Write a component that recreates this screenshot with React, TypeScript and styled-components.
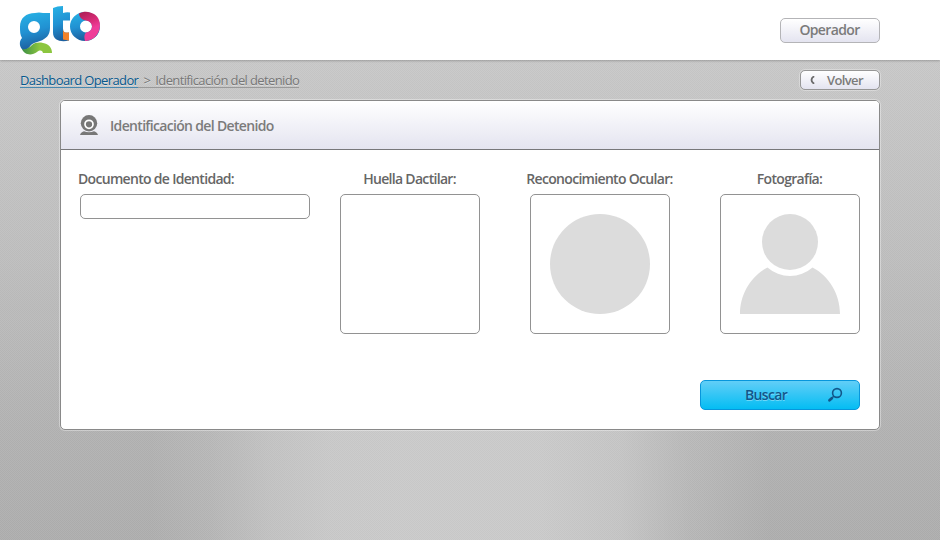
import React from "react";
import styled, { createGlobalStyle } from "styled-components";

const GlobalStyle = createGlobalStyle`
  * { box-sizing: border-box; }
  body { margin: 0; font-family: "Open Sans", "Noto Sans", sans-serif; color: #666; }
`;

const Page = styled.div`
  height: 540px;
  overflow: hidden;
  background:
    repeating-conic-gradient(rgba(255,255,255,0.05) 0 25%, rgba(0,0,0,0.015) 0 50%) 0 0 / 2px 2px,
    linear-gradient(90deg, transparent 150px, rgba(202,202,202,0.25) 210px, rgba(202,202,202,0.7) 270px, rgba(202,202,202,0.95) 330px, #cacaca 400px, #cacaca 540px, rgba(202,202,202,0.8) 620px, rgba(202,202,202,0.3) 690px, transparent 770px) 0 430px / 940px 110px no-repeat,
    linear-gradient(180deg, #c8c8c8 60px, #bebebe 260px, #b2b2b2 430px, #aeaeae 540px);
`;

const Header = styled.header`
  height: 60px;
  padding: 4px 60px 0 18px;
  display: flex;
  justify-content: space-between;
  background: #fff;
  box-shadow: 0 1px 2px rgba(0, 0, 0, 0.22);
`;

const Button = styled.button<{ $small?: boolean }>`
  display: flex;
  align-items: center;
  justify-content: ${(p) => (p.$small ? "flex-start" : "center")};
  width: ${(p) => (p.$small ? 80 : 100)}px;
  height: ${(p) => (p.$small ? 20 : 25)}px;
  margin-top: ${(p) => (p.$small ? 0 : 14)}px;
  padding: ${(p) => (p.$small ? "0 0 0 9px" : "0 1px 2px 0")};
  gap: 12px;
  border: 1px solid ${(p) => (p.$small ? "#969696" : "#b4b4b7")};
  border-radius: 5px;
  background: linear-gradient(#fff, #e4e4f0);
  box-shadow: ${(p) => (p.$small ? "0 0 0 1px rgba(255,255,255,0.3)" : "none")};
  color: #7b7b7b;
  font: 600 ${(p) => (p.$small ? 13 : 14)}px/18px "Open Sans", sans-serif;
  letter-spacing: -0.63px;
`;

const NavRow = styled.nav`
  height: 40px;
  padding: 10px 60px 0 20px;
  display: flex;
  justify-content: space-between;
`;

const Crumbs = styled.div`
  display: flex;
  height: 17px;
  margin-top: 1px;
  font-size: 13px;
  line-height: 18px;
  letter-spacing: -0.62px;
  color: #777;
  border-bottom: 1px solid #999;
  text-shadow: 0 1px rgba(255, 255, 255, 0.4);
`;

const CrumbLink = styled.a`
  height: 17px;
  color: #07588d;
  border-bottom: 1px solid #4588b0;
`;

const Separator = styled.span`
  width: 17px;
  text-align: center;
`;

const Panel = styled.main`
  width: 820px;
  height: 330px;
  margin: 0 60px;
  border: 1px solid #898989;
  border-radius: 5px;
  background: #fff;
  box-shadow: 0 0 0 1px rgba(255, 255, 255, 0.35);
`;

const PanelHeader = styled.div`
  height: 49px;
  padding: 0 19px;
  display: flex;
  align-items: center;
  gap: 12px;
  border-bottom: 1px solid #77777a;
  border-radius: 4px 4px 0 0;
  background: linear-gradient(#fff, #e4e4f0);
`;

const Title = styled.h1`
  margin: 0;
  padding-top: 1px;
  color: #7b7b7b;
  font-size: 14px;
  font-weight: 600;
  line-height: 20px;
  letter-spacing: -0.67px;
`;

const Fields = styled.form`
  height: 230px;
  padding: 18px 19px 0;
  display: grid;
  grid-template-columns: 260px 190px 190px 140px;
`;

const Field = styled.div<{ $wide?: boolean }>`
  width: ${(p) => (p.$wide ? 230 : 140)}px;
  display: flex;
  flex-direction: column;
  align-items: ${(p) => (p.$wide ? "flex-start" : "center")};
`;

const Label = styled.label<{ $start?: boolean }>`
  height: 26px;
  margin-left: ${(p) => (p.$start ? -2 : -1)}px;
  color: #666;
  font-size: 14px;
  font-weight: 600;
  line-height: 22px;
  letter-spacing: -0.69px;
  white-space: nowrap;
`;

const Input = styled.input`
  width: 230px;
  height: 25px;
  border: 1px solid #929292;
  border-radius: 5px;
  background: #fff;
`;

const Preview = styled.div`
  width: 140px;
  height: 140px;
  padding: 19px;
  border: 1px solid #929292;
  border-radius: 5px;
`;

const Actions = styled.div`
  padding-right: 19px;
  display: flex;
  justify-content: flex-end;
`;

const SearchButton = styled.button`
  width: 160px;
  height: 30px;
  padding: 0 16px 0 44px;
  display: flex;
  align-items: center;
  justify-content: space-between;
  border: 1px solid #0796dc;
  border-radius: 5px;
  background: linear-gradient(#62cef7, #04bdf3);
  color: #12568a;
  font: 600 14px/18px "Open Sans", sans-serif;
  letter-spacing: -0.65px;
  text-shadow: 0 1px rgba(255, 255, 255, 0.35);
`;

const Logo = () => (
  <svg width="84" height="54" viewBox="0 0 84 54" aria-label="gto">
    <defs>
      <linearGradient id="blue" x1="0" y1="0" x2="0.2" y2="1">
        <stop offset="0" stopColor="#27b3e6" />
        <stop offset="0.55" stopColor="#2191d2" />
        <stop offset="1" stopColor="#1d609f" />
      </linearGradient>
      <linearGradient id="green" x1="0" x2="1">
        <stop offset="0" stopColor="#3d8f45" />
        <stop offset="0.6" stopColor="#8cc63f" />
        <stop offset="1" stopColor="#8cc63f" />
      </linearGradient>
      <linearGradient id="pink" x1="0" y1="0" x2="0.3" y2="1">
        <stop offset="0" stopColor="#a81c52" />
        <stop offset="0.45" stopColor="#d92c78" />
        <stop offset="0.7" stopColor="#ef3d99" />
      </linearGradient>
    </defs>
    <path fill="url(#blue)" fillRule="evenodd" d="M17 9q4-1 8 0h7v15c0 7-4 11-10 13-4 1.500-7 2-9 4-2 3-4 5-8 5-4-3-4-9-1-12-2-3-2-7-2-11C2 14 8 9 17 9Zm-1 8a6 6 0 1 0 0 12a6 6 0 0 0 0-12Z" />
    <path fill="url(#green)" d="M4 45c4 1 7-1 10-4 3-2.500 7-3 11-2 6 1 9 5 9 10h-9c-1-3-3-3-6-1-5 4-13 3-15-3Z" />
    <path fill="url(#blue)" d="M35 4q4-2 10-2v7q3-1 7-.500v8h-7v8c0 4 2 5 6 4v8c-8 2-16 0-16-8Z" />
    <path fill="#f58228" d="M45 25c0 3 2 4 6 3.500v8l-6-1Z" />
    <path fill="url(#blue)" fillRule="evenodd" d="M67 8a15 14.500 0 1 0 0 29a15 14.500 0 0 0 0-29Zm1 8.500a6 6 0 1 1 0 12a6 6 0 0 1 0-12Z" />
    <path fill="url(#pink)" d="M61 9.500c5-3 11-2 15 .500 5 3 7 9 5.500 15C80 32 74 37 67 37c-1-4-1-6 1-8.500 8-1 8-11 0-12-3 0-7-3-7-7Z" />
  </svg>
);

const WebcamIcon = () => (
  <svg width="18" height="21" viewBox="0 0 18 21" fill="#777">
    <circle cx="9" cy="8.2" r="8.2" />
    <circle cx="9" cy="9.3" r="4" fill="none" stroke="#fff" strokeWidth="1.700" />
    <path d="M0 20c.6-2 2.400-3.300 4-3.700 3 1.200 7 1.200 10 0 1.600.4 3.400 1.700 4 3.700Z" />
  </svg>
);

const BackIcon = () => (
  <svg width="5" height="8" viewBox="0 0 5 8">
    <path d="M4.200.3C2 1.400 1.500 2.400 1.500 4s.5 2.600 2.700 3.700" fill="none" stroke="#6b6b6b" strokeWidth="1.800" />
  </svg>
);

const SearchIcon = () => (
  <svg width="16" height="16" viewBox="0 0 16 16" fill="none" stroke="#12568a">
    <circle cx="10" cy="6" r="4.400" strokeWidth="1.600" />
    <path d="M6.700 9.300 5.500 10.500" strokeWidth="1.500" />
    <path d="M4.800 11.200 2.500 13.300" strokeWidth="2.800" strokeLinecap="round" />
  </svg>
);

const EyePlaceholder = () => (
  <svg width="100" height="100" viewBox="0 0 100 100">
    <circle cx="50" cy="50" r="50" fill="#dcdcdc" />
  </svg>
);

const PersonPlaceholder = () => (
  <svg width="100" height="100" viewBox="0 0 100 100" fill="#dcdcdc">
    <circle cx="50" cy="28" r="28" />
    <path d="M27.500 53.500A34 34 0 0 0 72.500 53.500C89 62 100 80 100 100H0C0 80 11 62 27.500 53.500Z" />
  </svg>
);

export default function App() {
  return (
    <>
      <GlobalStyle />
      <Page>
        <Header>
          <Logo />
          <Button>Operador</Button>
        </Header>
        <NavRow>
          <Crumbs>
            <CrumbLink>Dashboard Operador</CrumbLink>
            <Separator>&gt;</Separator>
            <span>Identificación del detenido</span>
          </Crumbs>
          <Button $small>
            <BackIcon />
            Volver
          </Button>
        </NavRow>
        <Panel>
          <PanelHeader>
            <WebcamIcon />
            <Title>Identificación del Detenido</Title>
          </PanelHeader>
          <Fields>
            <Field $wide>
              <Label $start htmlFor="documento">Documento de Identidad:</Label>
              <Input id="documento" />
            </Field>
            <Field>
              <Label>Huella Dactilar:</Label>
              <Preview />
            </Field>
            <Field>
              <Label>Reconocimiento Ocular:</Label>
              <Preview><EyePlaceholder /></Preview>
            </Field>
            <Field>
              <Label>Fotografía:</Label>
              <Preview><PersonPlaceholder /></Preview>
            </Field>
          </Fields>
          <Actions>
            <SearchButton type="button">
              Buscar
              <SearchIcon />
            </SearchButton>
          </Actions>
        </Panel>
      </Page>
    </>
  );
}
